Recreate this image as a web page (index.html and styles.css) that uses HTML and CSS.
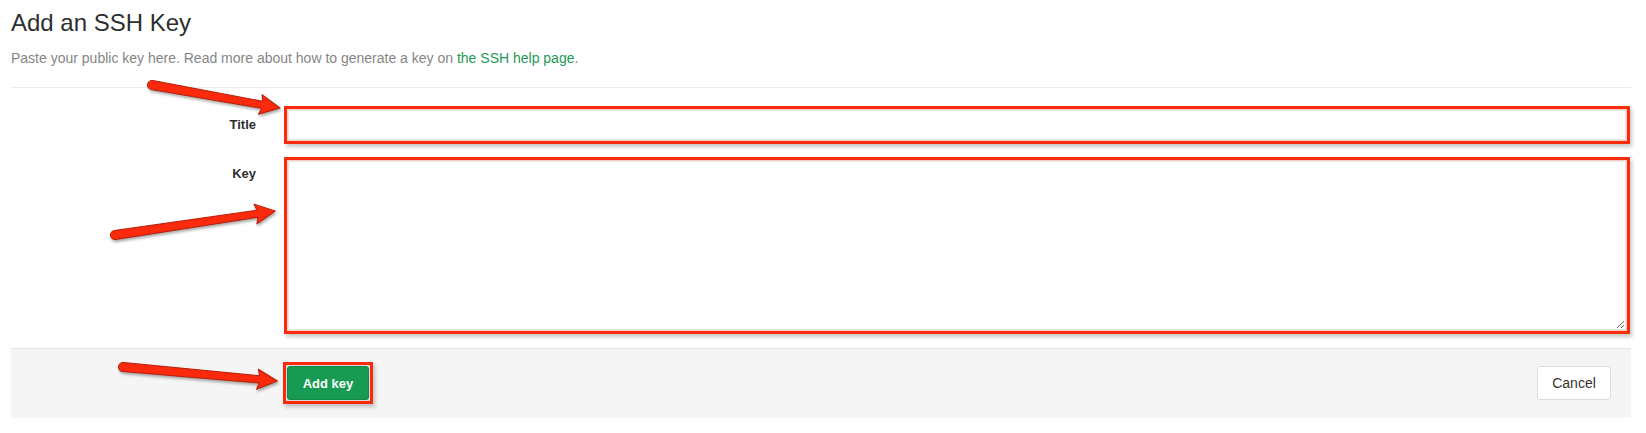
FILE: index.html
```html
<!DOCTYPE html>
<html lang="en">
<head>
<meta charset="utf-8">
<title>Add an SSH Key</title>
<link rel="stylesheet" href="styles.css">
</head>
<body>
<div class="page">
  <h3 class="page-title">Add an SSH Key</h3>
  <p class="lead">Paste your public key here. Read more about how to generate a key on <a href="#" class="link">the SSH help page</a>.</p>
  <hr class="sep">
  <form class="form">
    <div class="form-group">
      <label class="label" for="title">Title</label>
      <div class="field">
        <input id="title" class="input mark" type="text">
      </div>
    </div>
    <div class="form-group">
      <label class="label label-top" for="key">Key</label>
      <div class="field">
        <textarea id="key" class="textarea mark"></textarea>
      </div>
    </div>
    <div class="form-actions">
      <span class="mark-wrap"><button type="button" class="btn btn-create">Add key</button></span>
      <button type="button" class="btn btn-cancel">Cancel</button>
    </div>
  </form>
</div>
<svg class="arrows" width="1646" height="433" viewBox="0 0 1646 433" xmlns="http://www.w3.org/2000/svg">
  <g transform="translate(152 85) rotate(10.2)">
    <path class="arrow" d="M0,-4.5 L112,-3.6 L110,-10 L130,0 L110,10 L112,3.6 L0,4.5 A4.5,4.5 0 0 1 0,-4.5 Z"/>
  </g>
  <g transform="translate(115 235) rotate(-8.5)">
    <path class="arrow" d="M0,-4.5 L144,-3.6 L142,-10 L162,0 L142,10 L144,3.6 L0,4.5 A4.5,4.5 0 0 1 0,-4.5 Z"/>
  </g>
  <g transform="translate(123 367) rotate(5.2)">
    <path class="arrow" d="M0,-4.5 L137,-3.6 L135,-10 L155,0 L135,10 L137,3.6 L0,4.5 A4.5,4.5 0 0 1 0,-4.5 Z"/>
  </g>
</svg>
</body>
</html>
```

FILE: styles.css
```css
html, body {
  margin: 0;
  padding: 0;
  background: #fff;
}

body {
  font-family: "Liberation Sans", Arial, Helvetica, sans-serif;
  font-size: 13px;
  color: #2e2e2e;
  width: 1646px;
  height: 433px;
  overflow: hidden;
  position: relative;
}

.page {
  padding: 0 15px 0 11px;
}

.page-title {
  margin: 10px 0 12px;
  font-size: 24px;
  line-height: 26px;
  font-weight: normal;
  color: #2e2e2e;
}

.lead {
  margin: 0;
  font-size: 14px;
  line-height: 20px;
  color: #858585;
}

.link {
  color: #1f9a55;
  text-decoration: none;
}

.sep {
  margin: 19px 0 0;
  border: 0;
  border-top: 1px solid #ececec;
  height: 0;
}

.form {
  padding-top: 22px;
}

.form-group {
  display: flex;
  margin-bottom: 21px;
}

.label {
  width: 245px;
  flex: none;
  padding-right: 15px;
  text-align: right;
  font-weight: bold;
  font-size: 13px;
  line-height: 30px;
  color: #2e2e2e;
}

.label-top {
  line-height: 26px;
}

.field {
  flex: 1;
  padding-left: 17px;
  padding-right: 5px;
}

.input,
.textarea {
  display: block;
  width: 100%;
  box-sizing: border-box;
  border: 1px solid #e5e5e5;
  background: #fff;
  font-family: inherit;
  font-size: 13px;
  margin: 0;
  padding: 4px 8px;
}

.input {
  height: 30px;
}

.textarea {
  height: 169px;
  resize: vertical;
}

.mark {
  outline: none;
  box-shadow: 0 0 0 1px #fbd0c8, 0 0 0 4px #fa2a0c, 2px 3px 4px 4px rgba(0, 0, 0, 0.22);
}

.form-actions {
  margin-top: -3px;
  display: flex;
  justify-content: space-between;
  align-items: center;
  padding: 16px 20px 17px 275px;
  background: #f5f5f5;
  border-top: 1px solid #e5e5e5;
}

.mark-wrap {
  display: inline-flex;
  padding: 1px;
  background: #d9d9d9;
  box-shadow: 0 0 0 3px #fa2a0c, 2px 3px 4px 3px rgba(0, 0, 0, 0.22);
}

.btn {
  height: 34px;
  box-sizing: border-box;
  border-radius: 3px;
  font-family: inherit;
  cursor: pointer;
  margin: 0;
}

.btn-create {
  width: 82px;
  background: #179a51;
  border: 1px solid #13894a;
  color: #fff;
  font-weight: bold;
  font-size: 13px;
}

.btn-cancel {
  width: 74px;
  background: #fff;
  border: 1px solid #dcdcdc;
  color: #333;
  font-size: 14px;
}

.arrows {
  position: absolute;
  left: 0;
  top: 0;
  pointer-events: none;
  filter: drop-shadow(1px 2px 1.5px rgba(0, 0, 0, 0.35));
}

.arrow {
  fill: #fb2a0c;
  stroke: #b81f08;
  stroke-width: 1;
  stroke-linejoin: round;
}
```
